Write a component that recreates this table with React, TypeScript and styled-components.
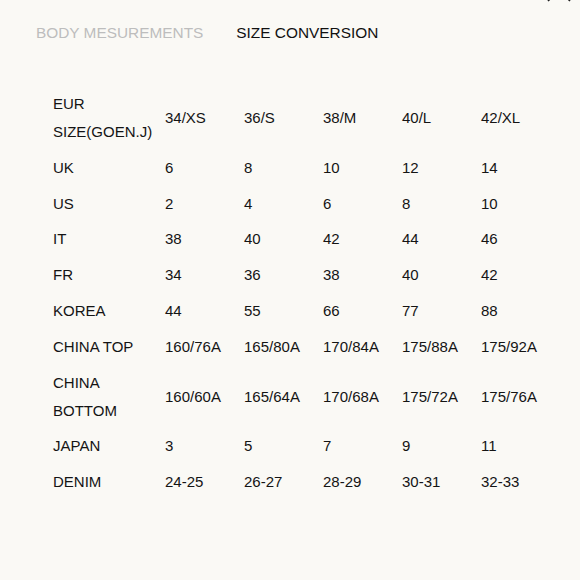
import * as React from 'react'
import styled, { createGlobalStyle } from 'styled-components'

const GlobalStyle = createGlobalStyle`
  html, body {
    margin: 0;
    padding: 0;
    background: #faf9f5;
  }
  body {
    font-family: 'Liberation Sans', Arial, sans-serif;
    color: #141414;
  }
`

const Page = styled.div`
  position: relative;
  width: 580px;
  height: 580px;
  overflow: hidden;
  background: #faf9f5;
`

const CloseButton = styled.button`
  position: absolute;
  top: -22px;
  left: 546px;
  width: 26px;
  height: 24px;
  padding: 0;
  border: none;
  background: none;
  color: #222;
`

const Tabs = styled.nav`
  display: flex;
  gap: 33px;
  padding: 23px 0 0 36px;
`

const Tab = styled.span<{ $active?: boolean }>`
  font-size: 15.4px;
  line-height: 20px;
  color: ${(p) => (p.$active ? '#111' : '#bdbdbd')};
`

const Table = styled.table`
  margin: 43px 0 0 53px;
  border-collapse: collapse;
  table-layout: fixed;
  font-size: 15px;
  line-height: 28px;
  color: #141414;
`

const Cell = styled.td<{ $label?: boolean }>`
  width: ${(p) => (p.$label ? '112px' : '79px')};
  padding: 4px 0 3.8px;
  vertical-align: middle;
  white-space: nowrap;
  text-align: left;
`

const rows: [string[], string[]][] = [
  [['EUR', 'SIZE(GOEN.J)'], ['34/XS', '36/S', '38/M', '40/L', '42/XL']],
  [['UK'], ['6', '8', '10', '12', '14']],
  [['US'], ['2', '4', '6', '8', '10']],
  [['IT'], ['38', '40', '42', '44', '46']],
  [['FR'], ['34', '36', '38', '40', '42']],
  [['KOREA'], ['44', '55', '66', '77', '88']],
  [['CHINA TOP'], ['160/76A', '165/80A', '170/84A', '175/88A', '175/92A']],
  [['CHINA', 'BOTTOM'], ['160/60A', '165/64A', '170/68A', '175/72A', '175/76A']],
  [['JAPAN'], ['3', '5', '7', '9', '11']],
  [['DENIM'], ['24-25', '26-27', '28-29', '30-31', '32-33']],
]

export default function App() {
  return (
    <Page>
      <GlobalStyle />
      <CloseButton aria-label="Close">
        <svg width="26" height="24" viewBox="0 0 26 24" fill="none" stroke="currentColor" strokeWidth="1.6">
          <path d="M2 1 L24 23 M24 1 L2 23" />
        </svg>
      </CloseButton>
      <Tabs>
        <Tab>BODY MESUREMENTS</Tab>
        <Tab $active>SIZE CONVERSION</Tab>
      </Tabs>
      <Table>
        <tbody>
          {rows.map(([label, values]) => (
            <tr key={label.join(' ')}>
              <Cell $label>
                {label.map((line, i) => (
                  <React.Fragment key={line}>
                    {i > 0 && <br />}
                    {line}
                  </React.Fragment>
                ))}
              </Cell>
              {values.map((v, i) => (
                <Cell key={i}>{v}</Cell>
              ))}
            </tr>
          ))}
        </tbody>
      </Table>
    </Page>
  )
}
